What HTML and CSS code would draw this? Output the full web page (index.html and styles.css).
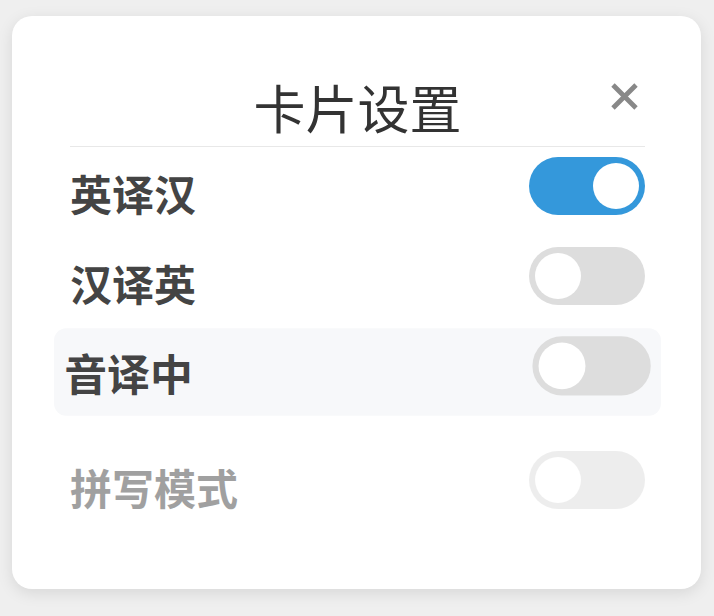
FILE: index.html
```html
<!DOCTYPE html>
<html lang="zh-CN">
<head>
    <meta charset="UTF-8">
    <meta name="viewport" content="width=device-width, initial-scale=1.0">
    <title>卡片设置</title>
    <link rel="stylesheet" href="styles.css">
</head>
<body>
    <div class="settings-card">
        <div class="settings-header">
            <h2>卡片设置</h2>
            <button class="close-btn" aria-label="关闭">
                <svg width="29" height="29" viewBox="0 0 29 29">
                    <path d="M3 3 L26 26 M26 3 L3 26" stroke="#888" stroke-width="4.8" fill="none"/>
                </svg>
            </button>
        </div>
        <div class="setting-row">
            <span class="setting-label">英译汉</span>
            <span class="switch on"><span class="knob"></span></span>
        </div>
        <div class="setting-row">
            <span class="setting-label">汉译英</span>
            <span class="switch"><span class="knob"></span></span>
        </div>
        <div class="setting-row hover">
            <span class="setting-label">音译中</span>
            <span class="switch"><span class="knob"></span></span>
        </div>
        <div class="setting-row disabled">
            <span class="setting-label">拼写模式</span>
            <span class="switch"><span class="knob"></span></span>
        </div>
    </div>
</body>
</html>
```

FILE: styles.css
```css
body {
    margin: 0;
    padding: 16px 13px 0 12px;
    background-color: #efefef;
    font-family: "Noto Sans CJK SC", "Noto Sans", sans-serif;
    height: 616px;
    box-sizing: border-box;
    overflow: hidden;
}

/* card */
.settings-card {
    background-color: #fff;
    border-radius: 20px;
    box-shadow: 0 4px 16px rgba(0, 0, 0, 0.1);
    padding: 60px 46px 56px 48px;
}
.settings-header {
    position: relative;
    margin: 0 10px 2px;
    padding-bottom: 9px;
    border-bottom: 1px solid #e8e8e8;
    text-align: center;
}
.settings-header h2 {
    margin: 0;
    font-size: 52px;
    line-height: 61px;
    font-weight: 400;
    color: #333;
}
.close-btn {
    position: absolute;
    right: 6px;
    top: 6px;
    border: none;
    background: none;
    padding: 0;
    width: 29px;
    height: 29px;
    cursor: pointer;
}
.close-btn svg {
    display: block;
}

/* rows */
.setting-row {
    display: flex;
    align-items: center;
    justify-content: space-between;
    height: 86px;
    padding: 0 10px;
    margin-bottom: 4px;
    border-radius: 12px;
}
.setting-row.hover {
    background-color: #f7f8fa;
    transform: scale(1.02);
}
.setting-row.disabled {
    margin-top: 28px;
    opacity: 0.5;
}
.setting-label {
    font-size: 42px;
    font-weight: 700;
    color: #444;
}

/* toggle */
.switch {
    position: relative;
    display: block;
    width: 116px;
    height: 58px;
    margin-bottom: 12px;
    border-radius: 29px;
    background-color: #ddd;
}
.switch.on {
    background-color: #3498db;
}
.knob {
    position: absolute;
    left: 6px;
    top: 6px;
    width: 46px;
    height: 46px;
    border-radius: 50%;
    background-color: #fff;
}
.switch.on .knob {
    left: 64px;
}
```
